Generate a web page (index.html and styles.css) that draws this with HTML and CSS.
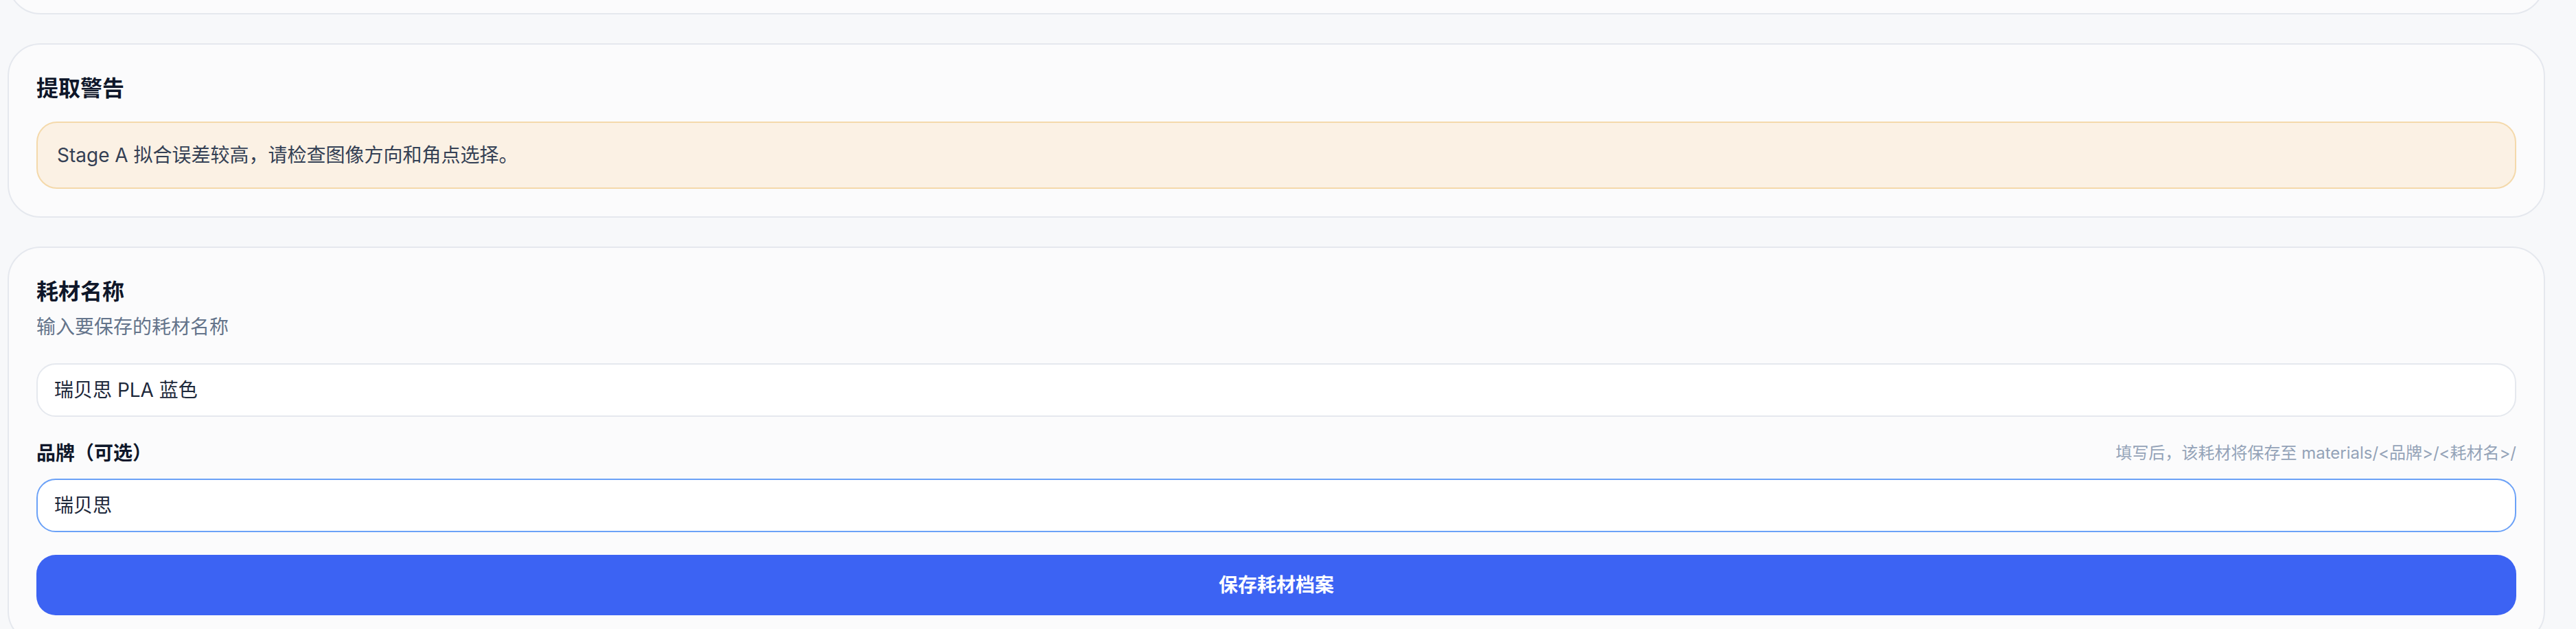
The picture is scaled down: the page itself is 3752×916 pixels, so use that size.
FILE: index.html
```html
<!DOCTYPE html>
<html lang="zh-CN">
  <head>
    <meta charset="UTF-8" />
    <meta name="viewport" content="width=device-width, initial-scale=1.0" />
    <title>保存耗材档案</title>
    <link rel="stylesheet" href="styles.css">
  </head>
  <body>
    <main class="page">
      <!-- tarjeta anterior, ya desplazada fuera de la vista -->
      <section class="card card-prev"></section>

      <section class="card">
        <h2 class="card-title">提取警告</h2>
        <div class="warning-box">Stage A 拟合误差较高，请检查图像方向和角点选择。</div>
      </section>

      <section class="card">
        <h2 class="card-title">耗材名称</h2>
        <p class="card-desc">输入要保存的耗材名称</p>
        <input type="text" class="text-input" id="materialName" value="瑞贝思 PLA 蓝色" />

        <div class="field-head">
          <label class="field-label" for="brandInput">品牌（可选）</label>
          <span class="field-hint">填写后，该耗材将保存至 materials/&lt;品牌&gt;/&lt;耗材名&gt;/</span>
        </div>
        <input type="text" class="text-input is-focused" id="brandInput" value="瑞贝思" />

        <button class="save-btn" id="saveBtn">保存耗材档案</button>
      </section>
    </main>

    <script>
      // Dejar el cursor al final del campo de marca
      const brandInput = document.getElementById("brandInput");
      brandInput.focus();
      brandInput.setSelectionRange(brandInput.value.length, brandInput.value.length);
    </script>
  </body>
</html>
```

FILE: styles.css
```css
:root {
  --page-bg: #f7f8fa;
  --card-bg: #fbfbfc;
  --card-border: #e5e8ee;
  --title-color: #0f172a;
  --muted-color: #64748b;
  --hint-color: #94a3b8;
  --primary-color: #3c63f3;
  --focus-color: #6ba1f7;
}

* {
  box-sizing: border-box;
}

body {
  margin: 0;
  background-color: var(--page-bg);
  font-family: "Inter", "Noto Sans CJK SC", sans-serif;
  color: var(--title-color);
  overflow: hidden;
}

.page {
  display: flex;
  flex-direction: column;
  gap: 42px;
  padding: 0 45px 0 11px;
}

.card {
  background-color: var(--card-bg);
  border: 2px solid var(--card-border);
  border-radius: 48px;
  padding: 40px;
}

.card-prev {
  height: 200px;
  margin-top: -179px;
}

.card-title {
  margin: 0;
  font-size: 32px;
  line-height: 48px;
  font-weight: 700;
  color: var(--title-color);
}

.card-title + .warning-box {
  margin-top: 24px;
}

.warning-box {
  background-color: #fbf1e4;
  border: 2px solid #f4d9ab;
  border-radius: 30px;
  padding: 26px 28px;
  font-size: 28px;
  line-height: 42px;
  color: #344054;
}

.card-desc {
  margin: 6px 0 0;
  font-size: 28px;
  line-height: 42px;
  color: var(--muted-color);
}

.text-input {
  display: block;
  width: 100%;
  margin-top: 32px;
  padding: 16px 24px;
  background-color: #ffffff;
  border: 2px solid var(--card-border);
  border-radius: 28px;
  font-family: inherit;
  font-size: 28px;
  line-height: 42px;
  color: #1e293b;
  caret-color: #1e293b;
  outline: none;
}

.text-input.is-focused {
  border-color: var(--focus-color);
}

.field-head {
  display: flex;
  justify-content: space-between;
  align-items: center;
  margin-top: 32px;
}

.field-head + .text-input {
  margin-top: 16px;
}

.field-label {
  font-size: 28px;
  line-height: 42px;
  font-weight: 700;
  color: var(--title-color);
}

.field-hint {
  font-size: 24px;
  line-height: 36px;
  color: var(--hint-color);
}

.save-btn {
  display: block;
  width: 100%;
  margin-top: 33px;
  padding: 23px 24px;
  border: none;
  border-radius: 28px;
  background-color: var(--primary-color);
  color: #ffffff;
  font-family: inherit;
  font-size: 28px;
  line-height: 42px;
  font-weight: 600;
  cursor: pointer;
}
```
